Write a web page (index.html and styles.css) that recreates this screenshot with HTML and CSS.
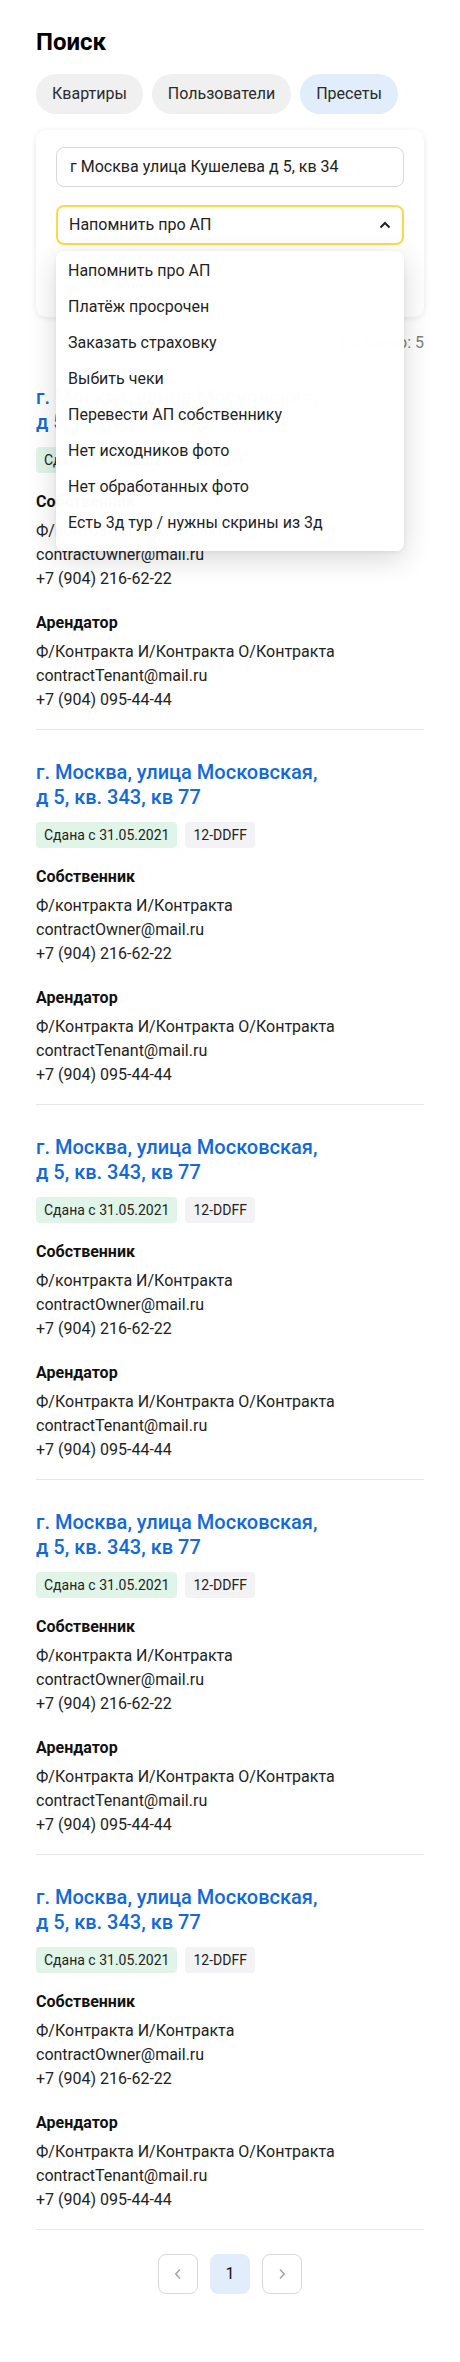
FILE: index.html
```html
<!DOCTYPE html>
<html lang="ru">
<head>
<meta charset="utf-8">
<title>Поиск</title>
<link rel="stylesheet" href="styles.css">
</head>
<body>
<div class="page">
  <h1 class="title">Поиск</h1>
  <div class="tabs">
    <span class="tab">Квартиры</span>
    <span class="tab">Пользователи</span>
    <span class="tab tab-active">Пресеты</span>
  </div>

  <div class="search-card">
    <div class="input">г Москва улица Кушелева д 5, кв 34</div>
    <div class="select-wrap">
      <div class="select">
        <span>Напомнить про АП</span>
        <svg class="chevron" width="12" height="8" viewBox="0 0 12 8"><path d="M1.5 6.5 6 2l4.5 4.5" fill="none" stroke="#222" stroke-width="2"/></svg>
      </div>
      <ul class="menu">
        <li>Напомнить про АП</li>
        <li>Платёж просрочен</li>
        <li>Заказать страховку</li>
        <li>Выбить чеки</li>
        <li>Перевести АП собственнику</li>
        <li>Нет исходников фото</li>
        <li>Нет обработанных фото</li>
        <li>Есть 3д тур / нужны скрины из 3д</li>
      </ul>
    </div>
    <div class="submit">Найти</div>
  </div>

  <div class="found">Найдено: 5</div>

  <div class="list">
    <div class="item">
      <a class="item-title">г. Москва, улица Московская,<br>д 5, кв. 343, кв 77</a>
      <div class="tags"><span class="tag tag-green">Сдана с 31.05.2021</span><span class="tag">12-DDFF</span></div>
      <div class="role">Собственник</div>
      <div class="info">Ф/контракта И/Контракта<br>contractOwner@mail.ru<br>+7 (904) 216-62-22</div>
      <div class="role role-second">Арендатор</div>
      <div class="info">Ф/Контракта И/Контракта О/Контракта<br>contractTenant@mail.ru<br>+7 (904) 095-44-44</div>
    </div>
    <div class="item">
      <a class="item-title">г. Москва, улица Московская,<br>д 5, кв. 343, кв 77</a>
      <div class="tags"><span class="tag tag-green">Сдана с 31.05.2021</span><span class="tag">12-DDFF</span></div>
      <div class="role">Собственник</div>
      <div class="info">Ф/контракта И/Контракта<br>contractOwner@mail.ru<br>+7 (904) 216-62-22</div>
      <div class="role role-second">Арендатор</div>
      <div class="info">Ф/Контракта И/Контракта О/Контракта<br>contractTenant@mail.ru<br>+7 (904) 095-44-44</div>
    </div>
    <div class="item">
      <a class="item-title">г. Москва, улица Московская,<br>д 5, кв. 343, кв 77</a>
      <div class="tags"><span class="tag tag-green">Сдана с 31.05.2021</span><span class="tag">12-DDFF</span></div>
      <div class="role">Собственник</div>
      <div class="info">Ф/контракта И/Контракта<br>contractOwner@mail.ru<br>+7 (904) 216-62-22</div>
      <div class="role role-second">Арендатор</div>
      <div class="info">Ф/Контракта И/Контракта О/Контракта<br>contractTenant@mail.ru<br>+7 (904) 095-44-44</div>
    </div>
    <div class="item">
      <a class="item-title">г. Москва, улица Московская,<br>д 5, кв. 343, кв 77</a>
      <div class="tags"><span class="tag tag-green">Сдана с 31.05.2021</span><span class="tag">12-DDFF</span></div>
      <div class="role">Собственник</div>
      <div class="info">Ф/контракта И/Контракта<br>contractOwner@mail.ru<br>+7 (904) 216-62-22</div>
      <div class="role role-second">Арендатор</div>
      <div class="info">Ф/Контракта И/Контракта О/Контракта<br>contractTenant@mail.ru<br>+7 (904) 095-44-44</div>
    </div>
    <div class="item">
      <a class="item-title">г. Москва, улица Московская,<br>д 5, кв. 343, кв 77</a>
      <div class="tags"><span class="tag tag-green">Сдана с 31.05.2021</span><span class="tag">12-DDFF</span></div>
      <div class="role">Собственник</div>
      <div class="info">Ф/Контракта И/Контракта<br>contractOwner@mail.ru<br>+7 (904) 216-62-22</div>
      <div class="role role-second">Арендатор</div>
      <div class="info">Ф/Контракта И/Контракта О/Контракта<br>contractTenant@mail.ru<br>+7 (904) 095-44-44</div>
    </div>
  </div>

  <div class="pager">
    <span class="pbtn"><svg width="8" height="12" viewBox="0 0 8 12"><path d="M6 1.5 1.8 6 6 10.5" fill="none" stroke="#a6a6a6" stroke-width="1.6"/></svg></span>
    <span class="pbtn pbtn-active">1</span>
    <span class="pbtn"><svg width="8" height="12" viewBox="0 0 8 12"><path d="M2 1.5 6.2 6 2 10.5" fill="none" stroke="#a6a6a6" stroke-width="1.6"/></svg></span>
  </div>
</div>
</body>
</html>
```

FILE: styles.css
```css
* { box-sizing: border-box; }
html, body { margin: 0; padding: 0; background: #fff; }
body {
  font-family: Roboto, "Noto Sans", "Liberation Sans", sans-serif;
  font-size: 16px;
  line-height: 24px;
  color: #1f1f1f;
}
.page { padding: 26px 36px 68px; }
.title {
  margin: 0 0 16px;
  font-size: 24px;
  line-height: 32px;
  font-weight: 700;
  color: #000;
}
.tabs { display: flex; gap: 9px; }
.tab {
  height: 40px;
  padding: 0 16px;
  border-radius: 20px;
  background: #f0f0f0;
  display: flex;
  align-items: center;
  color: #2b2b2b;
}
.tab-active { background: #e1edfa; }

.search-card {
  margin-top: 16px;
  padding: 17px 20px 14px;
  border-radius: 10px;
  box-shadow: 0 1px 6px rgba(0,0,0,0.09);
  display: flex;
  flex-direction: column;
  gap: 18px;
}
.input {
  height: 40px;
  border: 1px solid #d8d8d8;
  border-radius: 8px;
  padding: 0 13px;
  display: flex;
  align-items: center;
  color: #222;
}
.select-wrap { position: relative; }
.select {
  height: 40px;
  border: 2px solid #fcd94c;
  border-radius: 8px;
  padding: 0 10px 0 11px;
  display: flex;
  align-items: center;
  justify-content: space-between;
  color: #222;
}
.chevron { margin-right: 1px; }
.menu {
  position: absolute;
  z-index: 5;
  left: 0;
  right: 0;
  top: calc(100% + 6px);
  margin: 0;
  padding: 2px 0 10px;
  list-style: none;
  background: rgba(255,255,255,0.985);
  border-radius: 8px;
  box-shadow: 0 8px 28px rgba(0,0,0,0.16), 0 1px 4px rgba(0,0,0,0.06);
}
.menu li {
  height: 36px;
  padding: 0 12px;
  display: flex;
  align-items: center;
  color: #1f1f1f;
}
.submit {
  height: 40px;
  border-radius: 8px;
  display: flex;
  align-items: center;
  justify-content: center;
  color: #c4c4c4;
}

.found {
  margin-top: 14px;
  text-align: right;
  color: #808080;
}

.item {
  padding: 30px 0 17px;
  border-bottom: 1px solid #e8e8e8;
}
.item-title {
  display: block;
  font-size: 20px;
  line-height: 25px;
  font-weight: 500;
  color: #1169dc;
  text-decoration: none;
}
.tags { display: flex; gap: 8px; margin-top: 12px; }
.tag {
  height: 26px;
  padding: 0 8px;
  border-radius: 4px;
  background: #f3f3f5;
  font-size: 14px;
  display: flex;
  align-items: center;
  color: #222;
}
.tag-green { background: #e0f5e8; }
.role {
  margin-top: 17px;
  font-weight: 700;
  color: #111;
}
.role-second { margin-top: 20px; }
.info { margin-top: 5px; color: #222; }

.pager {
  display: flex;
  justify-content: center;
  gap: 12px;
  margin-top: 24px;
}
.pbtn {
  width: 40px;
  height: 40px;
  border: 1px solid #d9d9d9;
  border-radius: 8px;
  display: flex;
  align-items: center;
  justify-content: center;
  color: #111;
}
.pbtn-active { border-color: #e1edfa; background: #e1edfa; }
```
